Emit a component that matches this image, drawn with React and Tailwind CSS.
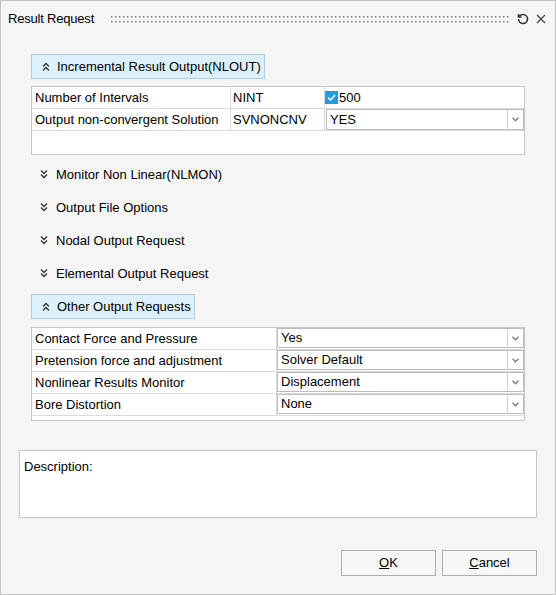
import { useState } from 'react';

const font = { fontFamily: '"Liberation Sans", Arial, sans-serif' };

function DoubleChevron({ up = false }) {
  return (
    <svg width="8" height="9" viewBox="0 0 8 9" className="shrink-0">
      {up ? (
        <g fill="none" stroke="#333" strokeWidth="1.35">
          <path d="M1 4.5 L4 1.5 L7 4.5" />
          <path d="M1 8.5 L4 5.5 L7 8.5" />
        </g>
      ) : (
        <g fill="none" stroke="#333" strokeWidth="1.35">
          <path d="M1 0.5 L4 3.5 L7 0.5" />
          <path d="M1 4.5 L4 7.5 L7 4.5" />
        </g>
      )}
    </svg>
  );
}

function Grip() {
  return (
    <svg width="398" height="9" className="shrink-0">
      <defs>
        <pattern id="dots" width="4" height="9" patternUnits="userSpaceOnUse">
          <rect x="0" y="1" width="1.5" height="1.5" fill="#7e7e7e" />
          <rect x="0" y="6" width="1.5" height="1.5" fill="#7e7e7e" />
        </pattern>
      </defs>
      <rect x="0" y="0" width="398" height="9" fill="url(#dots)" />
    </svg>
  );
}

function SelectBox({ value }) {
  return (
    <div className="flex h-full flex-1 border border-[#bcbcbc] bg-white">
      <div className="flex flex-1 items-center pl-[3px] text-[13px] text-black">{value}</div>
      <div className="flex w-[16px] items-center justify-center border-l border-[#d2d2d2]">
        <svg width="7" height="5" viewBox="0 0 7 5">
          <path d="M0.5 0.8 L3.5 3.8 L6.5 0.8" fill="none" stroke="#7a7a7a" strokeWidth="1.3" />
        </svg>
      </div>
    </div>
  );
}

function SectionButton({ label, open, onClick }) {
  if (open) {
    return (
      <button
        onClick={onClick}
        className="flex h-[25px] w-fit items-center gap-[7px] border border-[#a9cde3] bg-[#dcf0fb] pl-[10px] pr-[3px] text-[13px] text-black"
      >
        <DoubleChevron up />
        {label}
      </button>
    );
  }
  return (
    <button onClick={onClick} className="flex h-[33px] items-center gap-[8px] pl-[9px] text-[13px] text-black">
      <DoubleChevron />
      {label}
    </button>
  );
}

const otherRows = [
  ['Contact Force and Pressure', 'Yes'],
  ['Pretension force and adjustment', 'Solver Default'],
  ['Nonlinear Results Monitor', 'Displacement'],
  ['Bore Distortion', 'None'],
];

const collapsed = [
  'Monitor Non Linear(NLMON)',
  'Output File Options',
  'Nodal Output Request',
  'Elemental Output Request',
];

export default function App() {
  const [checked, setChecked] = useState(true);

  return (
    <div style={font} className="flex h-[595px] w-[556px] flex-col border border-[#c2c2c2] bg-[#f5f5f5] text-black">
      {/* title bar */}
      <div className="flex h-[36px] items-center pl-[7px] pr-[9px]">
        <span className="text-[13px] tracking-[-0.2px]">Result Request</span>
        <div className="ml-[17px] flex flex-1 items-center">
          <Grip />
        </div>
        <svg width="12" height="12" viewBox="0 0 24 24" className="mr-[7px]">
          <path d="M3 12a9 9 0 1 0 9-9 9.75 9.75 0 0 0-6.74 2.74L3 8" fill="none" stroke="#333" strokeWidth="3.2" />
          <path d="M3 2v6h6" fill="none" stroke="#333" strokeWidth="3.2" />
        </svg>
        <svg width="10" height="10" viewBox="0 0 10 10">
          <path d="M1 1 L9 9 M9 1 L1 9" stroke="#444" strokeWidth="1.2" />
        </svg>
      </div>

      <div className="flex flex-col pl-[30px] pr-[30px]">
        <div className="mt-[17px]">
          <SectionButton label="Incremental Result Output(NLOUT)" open />
        </div>

        {/* NLOUT table */}
        <div className="mt-[7px] flex h-[69px] flex-col border border-[#c6c6c6] bg-white text-[13px]">
          <div className="flex h-[22px] border-b border-[#dcdcdc]">
            <div className="flex w-[199px] items-center border-r border-[#dcdcdc] pl-[3px]">Number of Intervals</div>
            <div className="flex w-[94px] items-center border-r border-[#dcdcdc] pl-[2px]">NINT</div>
            <div className="flex flex-1 items-center">
              <button
                onClick={() => setChecked(!checked)}
                className="flex h-[13px] w-[13px] items-center justify-center bg-[#1e9de0]"
              >
                {checked && (
                  <svg width="9" height="7" viewBox="0 0 9 7">
                    <path d="M1 3.5 L3.5 6 L8 1" fill="none" stroke="white" strokeWidth="1.5" />
                  </svg>
                )}
              </button>
              <span className="ml-[1px]">500</span>
            </div>
          </div>
          <div className="flex h-[22px] border-b border-[#dcdcdc]">
            <div className="flex w-[199px] items-center border-r border-[#dcdcdc] pl-[3px]">Output non-convergent Solution</div>
            <div className="flex w-[94px] items-center border-r border-[#dcdcdc] pl-[2px]">SVNONCNV</div>
            <div className="flex flex-1 pl-px">
              <SelectBox value="YES" />
            </div>
          </div>
        </div>

        <div className="mt-[3px] flex flex-col">
          {collapsed.map((c) => (
            <SectionButton key={c} label={c} />
          ))}
        </div>

        <div className="mt-[4px]">
          <SectionButton label="Other Output Requests" open />
        </div>

        {/* other requests table */}
        <div className="mt-[8px] flex h-[94px] flex-col border border-[#c6c6c6] bg-white text-[13px]">
          {otherRows.map(([label, value]) => (
            <div key={label} className="flex h-[22px] border-b border-[#dcdcdc]">
              <div className="flex w-[245px] items-center border-r border-[#dcdcdc] pl-[3px]">{label}</div>
              <div className="flex flex-1 pb-px">
                <SelectBox value={value} />
              </div>
            </div>
          ))}
        </div>
      </div>

      {/* description */}
      <div className="mx-[18px] mt-[29px] h-[68px] border border-[#c6c6c6] bg-white pl-[4px] pt-[6px] text-[13px]">
        Description:
      </div>

      <div className="mt-[32px] flex justify-end gap-[6px] pr-[18px]">
        <button className="flex h-[26px] w-[95px] items-center justify-center border border-[#adadad] bg-[#f7f7f7] text-[13px]">
          <span className="underline">O</span>K
        </button>
        <button className="flex h-[26px] w-[95px] items-center justify-center border border-[#adadad] bg-[#f7f7f7] text-[13px]">
          <span className="underline">C</span>ancel
        </button>
      </div>
    </div>
  );
}
